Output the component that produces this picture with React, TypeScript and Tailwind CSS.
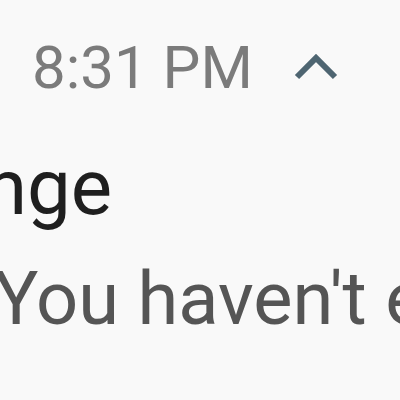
export default function App() {
  return (
    <div className="h-[400px] w-[400px] overflow-hidden bg-[#f9f9f9] font-['Roboto',sans-serif]">
      {/* header: time + collapse chevron */}
      <div className="flex items-center pl-[32px] pt-[38px]">
        <span className="text-[60px] leading-[60px] text-[#7b7b7b]">8:31 PM</span>
        <svg className="ml-[41px]" width="44" height="30" viewBox="0 0 44 30" fill="none">
          <polyline
            points="3,24 22,5 41,24"
            stroke="#4e6571"
            strokeWidth="6"
            strokeLinecap="butt"
            strokeLinejoin="miter"
          />
        </svg>
      </div>

      {/* title */}
      <div className="mt-[51px] -ml-[16px] whitespace-nowrap text-[78px] leading-[78px] text-[#1f1f1f]">
        nge
      </div>

      {/* body text */}
      <div className="mt-[35px] -ml-[6px] whitespace-nowrap text-[74px] leading-[74px] text-[#555555]">
        You haven't experienced
      </div>
    </div>
  );
}
